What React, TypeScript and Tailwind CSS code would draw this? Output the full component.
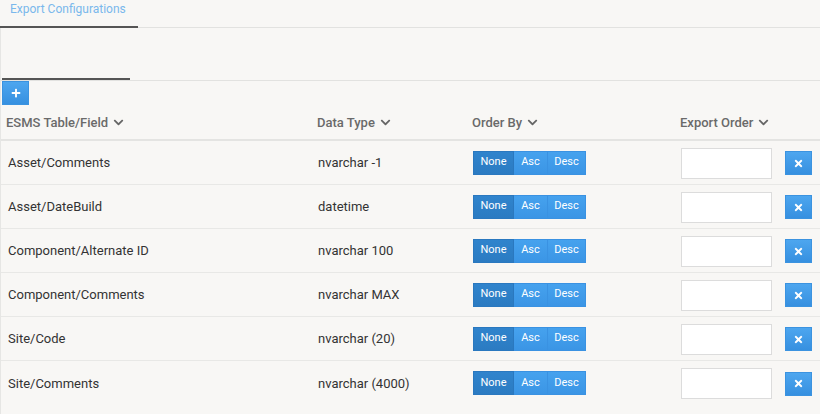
import React from "react";
import { FaChevronDown, FaPlus, FaTimes } from "react-icons/fa";

const rows = [
  ["Asset/Comments", "nvarchar -1"],
  ["Asset/DateBuild", "datetime"],
  ["Component/Alternate ID", "nvarchar 100"],
  ["Component/Comments", "nvarchar MAX"],
  ["Site/Code", "nvarchar (20)"],
  ["Site/Comments", "nvarchar (4000)"],
];

function Head({ label }: { label: string }) {
  return (
    <span className="flex items-center gap-[5px] text-[13px] font-medium text-[#6a6a6a]">
      {label}
      <FaChevronDown className="w-[11px] h-[11px] text-[#666]" />
    </span>
  );
}

export default function App() {
  return (
    <div
      className="w-[820px] h-[414px] overflow-hidden bg-[#f8f7f5] text-[#333]"
      style={{ fontFamily: "Roboto, 'Liberation Sans', sans-serif" }}
    >
      <div className="flex h-[28px] border-b border-[#e2e2e0]">
        <div className="w-[138px] h-[28px] -mb-px border-b-2 border-[#555] pl-[10px] pt-[1px] text-[12px] text-[#7ab8ec] leading-[16px]">
          Export Configurations
        </div>
      </div>
      <div className="border-l border-[#e6e6e4] h-[386px]">
        <div className="h-[53px] flex items-end border-b border-[#e2e2e0]">
          <div className="w-[128px] ml-px border-b-2 border-[#555]" />
        </div>
        <div className="pl-[1px]">
          <button className="w-[27px] h-[24px] flex items-center justify-center bg-gradient-to-b from-[#4da6ef] to-[#3690e0] border border-[#3b93e0]">
            <FaPlus className="w-[10px] h-[10px] text-white" />
          </button>
        </div>
        <div className="flex items-center h-[36px] border-b-2 border-[#e4e4e2] pt-[1px]">
          <div className="w-[311px] pl-[5px]"><Head label="ESMS Table/Field" /></div>
          <div className="w-[156px] pl-[5px]"><Head label="Data Type" /></div>
          <div className="w-[208px] pl-[4px]"><Head label="Order By" /></div>
          <div className="w-[103px] pl-[4px]"><Head label="Export Order" /></div>
        </div>
        {rows.map(([f, t], i) => (
          <div
            key={f}
            className={
              "flex items-center h-[44px] text-[13px] text-[#333] " +
              (i < rows.length - 1 ? "border-b border-[#e8e8e6]" : "")
            }
          >
            <div className="w-[311px] pl-[7px] pt-[1px]">{f}</div>
            <div className="w-[156px] pl-[6px] pt-[1px]">{t}</div>
            <div className="w-[208px] pl-[5px]">
              <div className="flex h-[24px] text-[11px] text-white">
                <span className="w-[41px] flex items-center justify-center bg-gradient-to-b from-[#3084cd] to-[#2b7bc2] border border-[#2a78bf]">None</span>
                <span className="w-[33px] flex items-center justify-center bg-gradient-to-b from-[#46a2ee] to-[#3b95e5] border-y border-[#3a92e2]">Asc</span>
                <span className="w-[39px] flex items-center justify-center bg-gradient-to-b from-[#46a2ee] to-[#3b95e5] border border-[#3a92e2]">Desc</span>
              </div>
            </div>
            <div className="w-[103px] pl-[5px] pt-[1px]">
              <input className="block w-[91px] h-[31px] bg-white border border-[#dcdcdc] outline-none" />
            </div>
            <div className="pl-[6px] pt-[1px]">
              <button className="w-[27px] h-[24px] flex items-center justify-center bg-gradient-to-b from-[#4da6ef] to-[#3690e0] border border-[#3b93e0]">
                <FaTimes className="w-[11px] h-[11px] text-white" />
              </button>
            </div>
          </div>
        ))}
      </div>
    </div>
  );
}
